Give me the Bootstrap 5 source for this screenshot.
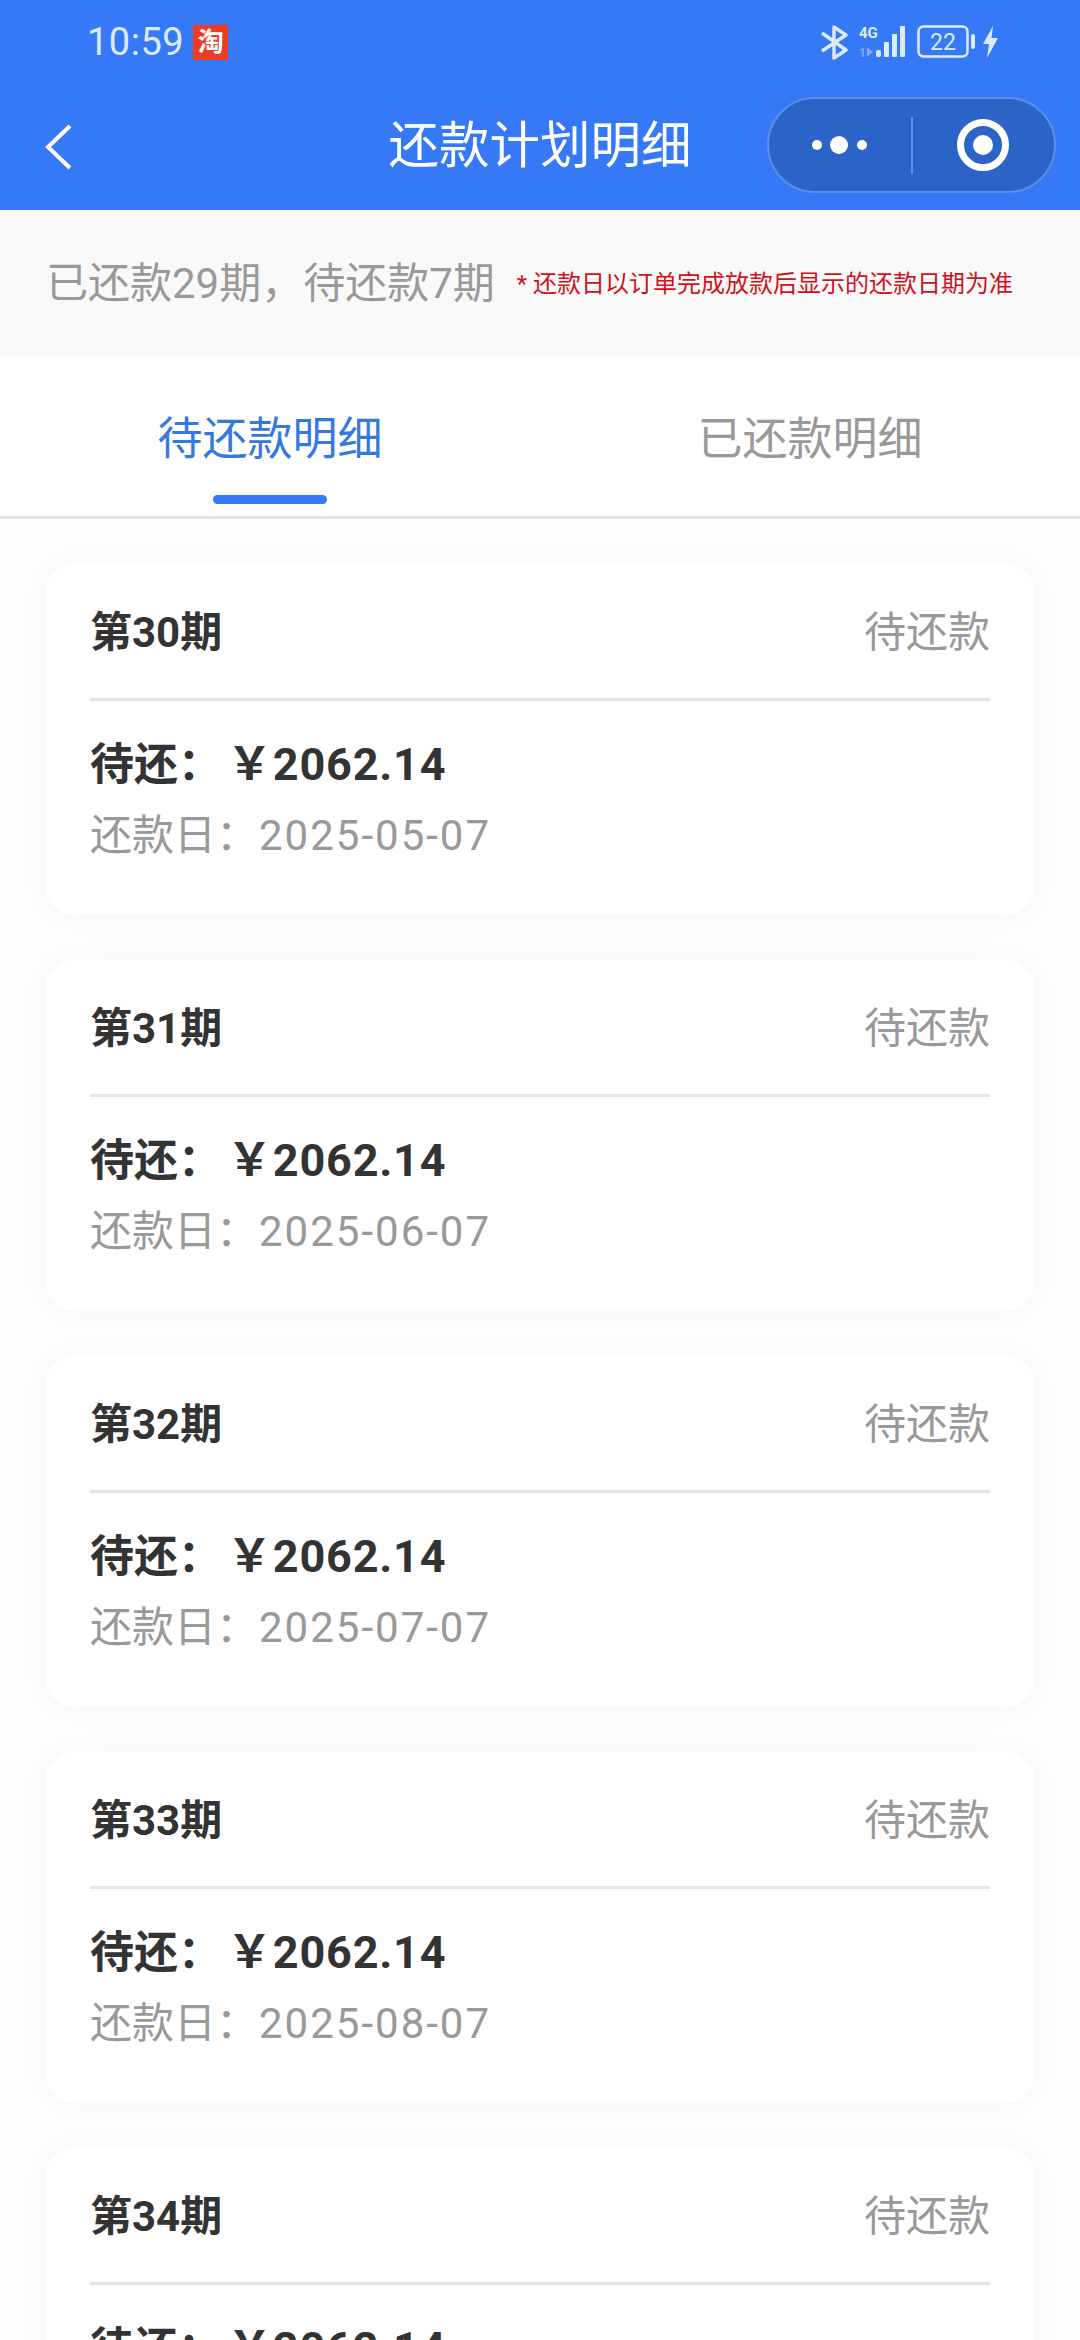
<!doctype html>
<html lang="zh">
<head>
<meta charset="utf-8">
<title>还款计划明细</title>
<link rel="stylesheet" href="https://cdn.jsdelivr.net/npm/bootstrap@5.3.0/dist/css/bootstrap.min.css">
<style>
html,body{height:2340px;overflow:hidden;}
body{background:#fdfdfd;font-family:Roboto,"Noto Sans CJK SC","Noto Sans",sans-serif;color:#333;}
.app-head{background:#3579f6;height:210px;color:#fff;}
.status-row{height:84px;padding:0 81px 0 87px;}
.clock{font-family:Roboto,sans-serif;font-size:38px;line-height:1;color:#dcebff;letter-spacing:.5px;}
.tao{width:35px;height:35px;background:#ee3b24;color:#fff;font-size:26px;font-weight:700;line-height:35px;text-align:center;margin-left:9px;}
.title-row{height:126px;padding:0 24px 0 45px;position:relative;}
.page-title{position:absolute;left:0;right:0;top:24px;text-align:center;font-size:50.5px;line-height:76px;font-weight:400;margin:0;}
.capsule{width:289px;height:96px;border-radius:48px;background:#2c63c6;border:2px solid #5c8fe8;margin-left:auto;position:relative;margin-top:-4px;}
.cap-side{flex:1 1 0;}
.cap-div{width:2px;height:57px;background:#5c8fe8;}
.strip{background:#f9f9f9;height:147px;padding:0 0 0 46px;}
.strip-main{font-size:42px;color:#999;line-height:1;white-space:nowrap;}
.strip-note{font-size:24px;color:#d0121b;line-height:1;margin-left:22px;white-space:nowrap;}
.tabs-row{background:#fff;height:162px;border-bottom:3px solid #e6e6e6;}
.tab-item{position:relative;font-size:45px;color:#999;line-height:1;padding-top:60px;height:100%;text-align:center;}
.tab-item.on{color:#3579e0;}
.tab-item.on::after{content:"";position:absolute;left:50%;margin-left:-57px;bottom:12px;width:114px;height:9px;border-radius:5px;background:#3579f6;}
.bill-list{padding:44px 45px 0;gap:44px;}
.bill{background:#fff;border-radius:30px;height:352px;padding:0 45px;box-shadow:0 0 30px rgba(0,0,0,.035);flex:none;}
.bill-top{height:138px;padding-top:5px;border-bottom:3px solid #e6e6e6;}
.bill-no{font-size:42px;font-weight:700;color:#333;line-height:1;}
.bill-state{font-size:42px;color:#999;line-height:1;}
.bill-due{font-size:44px;font-weight:700;color:#333;line-height:1;margin-top:41px;white-space:nowrap;}
.bill-sum{font-size:45px;letter-spacing:.8px;margin-left:5px;}
.bill-date{font-size:42px;color:#999;line-height:1;margin-top:28px;white-space:nowrap;}
.bill-day{letter-spacing:2px;margin-left:1px;}
</style>
</head>
<body>
<header class="app-head">
  <div class="status-row d-flex align-items-center">
    <span class="clock">10:59</span>
    <span class="tao">淘</span>
    <div class="ms-auto d-flex align-items-center">
      <svg width="32" height="36" viewBox="0 0 32 36" fill="none" stroke="#dcebff" stroke-width="3.4" stroke-linejoin="round"><path d="M3 9 L27 26 L15 34 V3 L27 11 L3 27"/></svg>
      <svg class="ms-2" width="50" height="36" viewBox="0 0 50 36"><text x="0" y="14" font-family="Roboto,sans-serif" font-size="15" font-weight="700" fill="#dcebff">4G</text><text x="0" y="33" font-family="Roboto,sans-serif" font-size="12" font-weight="700" fill="#7fa9f3">1</text><path d="M8 23 V33 L14 28 Z" fill="#7fa9f3"/><g fill="#dcebff"><rect x="17" y="26" width="5" height="7" rx="2"/><rect x="25" y="18" width="5" height="15" rx="1"/><rect x="33" y="10" width="5" height="23" rx="1"/><rect x="41" y="2" width="5" height="31" rx="1"/></g></svg>
      <svg class="ms-2" width="62" height="34" viewBox="0 0 62 34"><rect x="1.5" y="1.5" width="49" height="30" rx="5" fill="none" stroke="#dcebff" stroke-width="2.5"/><text x="26" y="25" text-anchor="middle" font-family="Roboto,sans-serif" font-size="23" fill="#dcebff">22</text><rect x="54" y="9" width="4" height="15" rx="2" fill="#dcebff"/></svg>
      <svg class="ms-1" width="16" height="32" viewBox="0 0 16 32"><path fill="#dcebff" d="M10 0 L0 18 H6 L4 32 L15 12 H8.5 Z"/></svg>
    </div>
  </div>
  <div class="title-row d-flex align-items-center">
    <svg width="28" height="46" viewBox="0 0 28 46" fill="none" stroke="#fff" stroke-width="4"><path d="M25 2 L3 23 L25 44"/></svg>
    <h1 class="page-title">还款计划明细</h1>
    <div class="capsule d-flex align-items-center">
      <div class="cap-side d-flex align-items-center justify-content-center">
        <svg width="56" height="20" viewBox="0 0 56 20" fill="#fff"><circle cx="5" cy="10" r="5"/><circle cx="27" cy="10" r="9"/><circle cx="50" cy="10" r="5"/></svg>
      </div>
      <div class="cap-div"></div>
      <div class="cap-side d-flex align-items-center justify-content-center">
        <svg width="54" height="54" viewBox="0 0 54 54"><circle cx="27" cy="27" r="22.5" fill="none" stroke="#fff" stroke-width="7"/><circle cx="27" cy="27" r="10" fill="#fff"/></svg>
      </div>
    </div>
  </div>
</header>
<div class="strip d-flex align-items-center">
  <span class="strip-main">已还款29期，待还款7期</span>
  <span class="strip-note">* 还款日以订单完成放款后显示的还款日期为准</span>
</div>
<nav class="tabs-row row g-0">
  <div class="col-6 tab-item on">待还款明细</div>
  <div class="col-6 tab-item">已还款明细</div>
</nav>
<main class="bill-list d-flex flex-column">
  <section class="bill">
    <div class="bill-top d-flex align-items-center justify-content-between"><span class="bill-no">第30期</span><span class="bill-state">待还款</span></div>
    <div class="bill-due">待还：<span class="bill-sum">￥2062.14</span></div>
    <div class="bill-date">还款日：<span class="bill-day">2025-05-07</span></div>
  </section>
  <section class="bill">
    <div class="bill-top d-flex align-items-center justify-content-between"><span class="bill-no">第31期</span><span class="bill-state">待还款</span></div>
    <div class="bill-due">待还：<span class="bill-sum">￥2062.14</span></div>
    <div class="bill-date">还款日：<span class="bill-day">2025-06-07</span></div>
  </section>
  <section class="bill">
    <div class="bill-top d-flex align-items-center justify-content-between"><span class="bill-no">第32期</span><span class="bill-state">待还款</span></div>
    <div class="bill-due">待还：<span class="bill-sum">￥2062.14</span></div>
    <div class="bill-date">还款日：<span class="bill-day">2025-07-07</span></div>
  </section>
  <section class="bill">
    <div class="bill-top d-flex align-items-center justify-content-between"><span class="bill-no">第33期</span><span class="bill-state">待还款</span></div>
    <div class="bill-due">待还：<span class="bill-sum">￥2062.14</span></div>
    <div class="bill-date">还款日：<span class="bill-day">2025-08-07</span></div>
  </section>
  <section class="bill">
    <div class="bill-top d-flex align-items-center justify-content-between"><span class="bill-no">第34期</span><span class="bill-state">待还款</span></div>
    <div class="bill-due">待还：<span class="bill-sum">￥2062.14</span></div>
    <div class="bill-date">还款日：<span class="bill-day">2025-09-07</span></div>
  </section>
</main>
<script src="https://cdn.jsdelivr.net/npm/bootstrap@5.3.0/dist/js/bootstrap.bundle.min.js"></script>
</body>
</html>
